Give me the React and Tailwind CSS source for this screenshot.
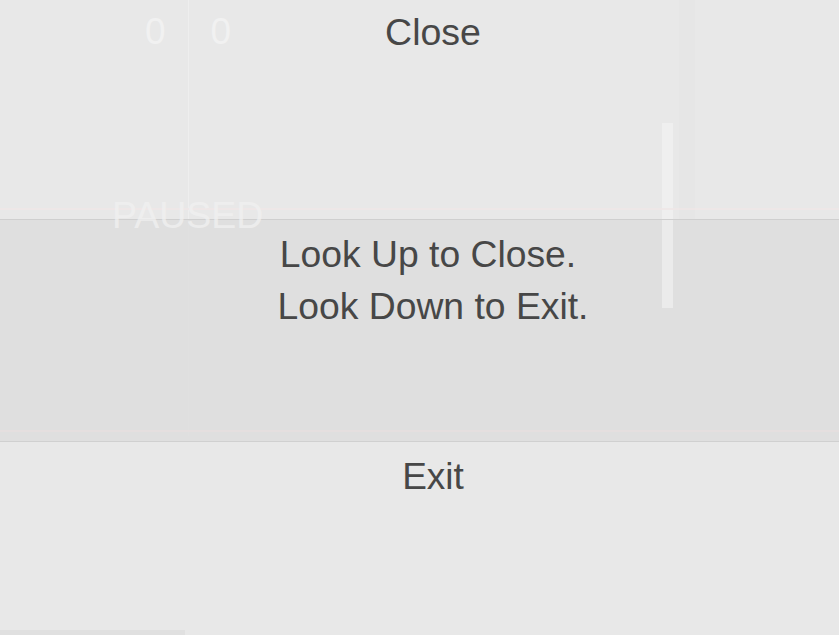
import React from 'react';

export default function App() {
  return (
    <div
      className="relative w-[839px] h-[635px] overflow-hidden bg-[#e8e8e8] text-[#474747]"
      style={{ fontFamily: '"Liberation Sans", Arial, sans-serif' }}
    >
      {/* Paused game behind the menu */}
      <div className="absolute inset-0 pointer-events-none">
        <div className="absolute left-[188px] top-0 w-px h-[436px] bg-[#eeeeee]" />
        <div className="absolute left-[679px] top-0 w-[16px] h-[436px] bg-[#e3e3e3]/40" />
        {/* score */}
        <div className="absolute left-[145px] top-[12px] flex gap-[45px] text-[37px] leading-[40px] text-[#f1f1f1]">
          <span>0</span>
          <span>0</span>
        </div>
        {/* paddle */}
        <div className="absolute left-[662px] top-[123px] w-[11px] h-[185px] bg-[#efefef]" />
        <div className="absolute left-0 bottom-0 w-[185px] h-[5px] bg-[#e0e0e0]" />
      </div>

      {/* Pause menu */}
      <div className="relative flex flex-col h-full">
        <div className="h-[220px] border-b border-[#cfcfcf] flex flex-col items-center pl-[27px] pt-[12px]">
          <span className="text-[37.5px] leading-[40px]">Close</span>
        </div>
        <div className="h-[222px] border-b border-[#d0d0d0] bg-[#dedede]/90 flex flex-col items-center pl-[27px] pt-[8px]">
          <span className="text-[37.3px] leading-[52px] pr-[10px]">Look Up to Close.</span>
          <span className="text-[37.3px] leading-[52px]">Look Down to Exit.</span>
        </div>
        <div className="flex flex-col items-center pl-[27px] pt-[15px]">
          <span className="text-[37px] leading-[40px]">Exit</span>
        </div>
      </div>

      {/* Game bits drawn across the menu */}
      <div className="absolute inset-0 pointer-events-none">
        <div className="absolute left-0 top-[208px] w-full h-[2px] bg-[#efe6e6]/80" />
        <div className="absolute left-0 top-[430px] w-full h-[2px] bg-[#e6dfdf]/80" />
        <div className="absolute left-[112px] top-[195px] text-[37.5px] leading-[40px] text-[#f0f0f0]/80">PAUSED</div>
        <div className="absolute left-[662px] top-[220px] w-[11px] h-[88px] bg-[#ebebeb]" />
      </div>
    </div>
  );
}
